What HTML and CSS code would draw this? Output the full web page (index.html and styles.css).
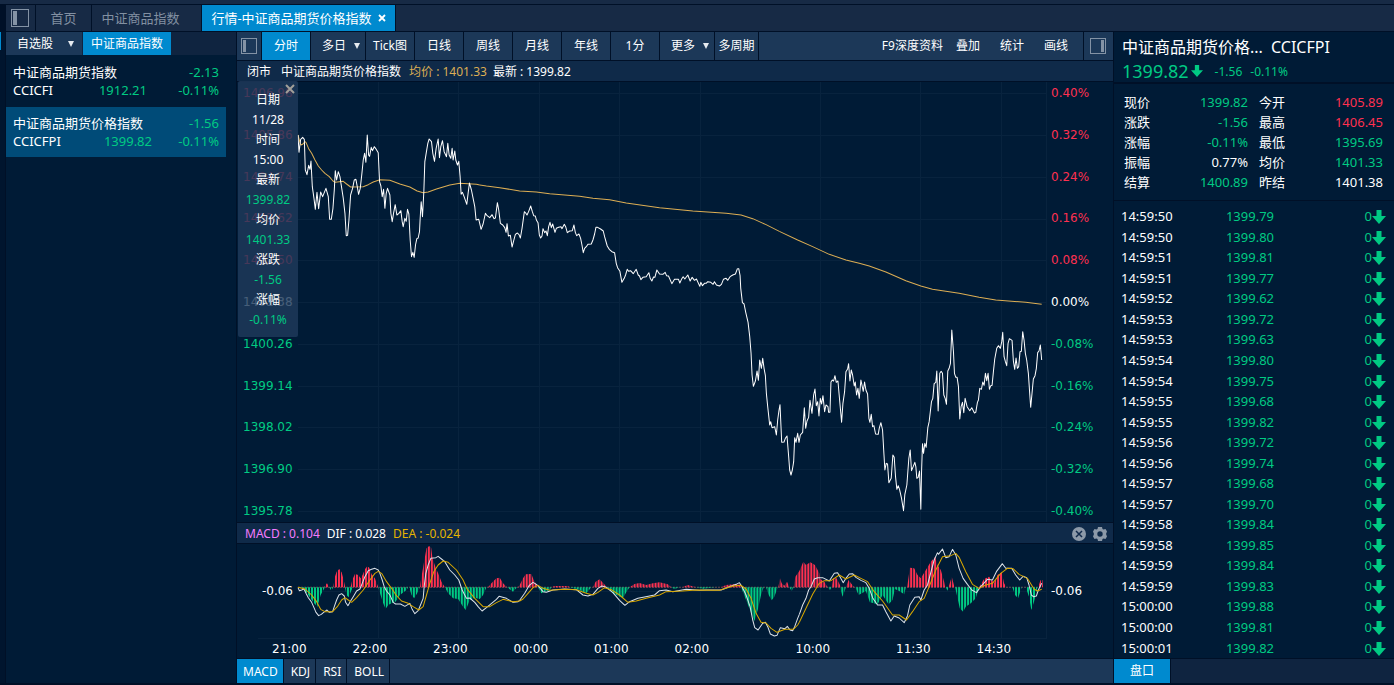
FILE: index.html
```html
<!DOCTYPE html>
<html lang="zh-CN">
<head>
<meta charset="utf-8">
<title>行情-中证商品期货价格指数</title>
<link rel="stylesheet" href="styles.css">
</head>
<body>
<div class="app">
  <nav class="tabs">
    <button class="tab tab-icon" aria-label="侧栏"><svg width="18" height="18" viewBox="0 0 18 18"><rect x=".5" y=".5" width="17" height="17" fill="none" stroke="#8493a5"/><rect x="2" y="2" width="4" height="14" fill="#8493a5"/></svg></button>
    <button class="tab tab-home">首页</button>
    <button class="tab tab-mid">中证商品指数</button>
    <button class="tab tab-on">行情-中证商品期货价格指数<svg width="8" height="8" viewBox="0 0 8 8"><path d="M1 1l6 6M7 1l-6 6" stroke="#fff" stroke-width="1.8"/></svg></button>
  </nav>
  <main class="main">
    <div class="edge"><i class="edge-mark"></i></div>

    <aside class="watch">
      <div class="watch-head">
        <button class="group">自选股<i class="caret"></i></button>
        <button class="group group-on">中证商品指数</button>
      </div>
      <ul class="list">
        <li class="item"><div class="row"><span>中证商品期货指数</span><span class="down">-2.13</span></div><div class="row"><span class="code">CCICFI</span><span class="down price">1912.21</span><span class="down pct">-0.11%</span></div></li>
        <li class="item item-on"><div class="row"><span>中证商品期货价格指数</span><span class="down">-1.56</span></div><div class="row"><span class="code">CCICFPI</span><span class="down price">1399.82</span><span class="down pct">-0.11%</span></div></li>
      </ul>
    </aside>

    <section class="center">
      <div class="toolbar">
        <button class="tool w-icon" aria-label="左栏"><svg width="16" height="16" viewBox="0 0 16 16"><rect x=".5" y=".5" width="15" height="15" fill="none" stroke="#8493a5"/><rect x="2" y="2" width="3" height="12" fill="#8493a5"/></svg></button>
        <button class="tool tool-on">分时</button>
        <button class="tool w-menu">多日<i class="caret"></i></button>
        <button class="tool">Tick图</button>
        <button class="tool">日线</button>
        <button class="tool">周线</button>
        <button class="tool">月线</button>
        <button class="tool">年线</button>
        <button class="tool">1分</button>
        <button class="tool w-menu">更多<i class="caret"></i></button>
        <button class="tool w-multi">多周期</button>
        <div class="links"><button class="link link-f9">F9深度资料</button><button class="link">叠加</button><button class="link">统计</button><button class="link">画线</button></div>
        <button class="tool w-end" aria-label="右栏"><svg width="16" height="16" viewBox="0 0 16 16"><rect x=".5" y=".5" width="15" height="15" fill="none" stroke="#8493a5"/><rect x="11" y="2" width="3" height="12" fill="#8493a5"/></svg></button>
      </div>
      <div class="info"><span class="state">闭市</span><span class="name">中证商品期货价格指数</span><span class="avg">均价 : 1401.33</span><span>最新 : 1399.82</span></div>

      <div class="chart">
        <div class="axis axis-left"><span class="up">1406.98</span><span class="up">1405.86</span><span class="up">1404.74</span><span class="up">1403.62</span><span class="up">1402.50</span><span>1401.38</span><span class="down">1400.26</span><span class="down">1399.14</span><span class="down">1398.02</span><span class="down">1396.90</span><span class="down">1395.78</span></div>
        <svg class="plot" viewBox="0 0 2250 1320" preserveAspectRatio="none">
          <path class="grid" d="M0 34H2250M0 160H2250M0 285H2250M0 411H2250M0 536H2250M0 661H2250M0 787H2250M0 912H2250M0 1037H2250M0 1163H2250M0 1288H2250M241 0V1320M483 0V1320M724 0V1320M967 0V1320M1208 0V1320M1570 0V1320M1871 0V1320M2113 0V1320M2248 0V1320"/>
          <g class="line-avg">
            <polyline transform="translate(-204 -6)" points="204,165 210,188 213,195 219,192 225,185 228,187 237,208 245,220 255,240 265,258 275,270 285,280 298,290 309,303 316,307 340,304 350,312 362,321 400,320 415,314 430,306 450,299 480,301 510,312 540,321 562,333 580,338 595,336 620,327 660,315 690,310 740,313 750,315"/>
            <polyline transform="translate(546 234)" points="0,75 20,78 60,83 120,93 170,96 210,101 300,109 340,115 390,119 440,129 540,143 640,153 740,160 785,165 820,176 860,194 900,214"/>
            <polyline transform="translate(1266 534)" points="180,-86 235,-60 280,-40 330,-17 380,0 420,10 450,18 500,36 560,62 605,78 640,88 680,94 720,100 780,112 830,120 920,127 968,133"/>
          </g>
          <g class="line-price">
            <polyline transform="translate(-204 -6)" points="204,165 207,217 212,178 218,172 223,178 226,270 231,284 236,256 240,268 243,243 247,320 252,355 256,388 261,337 266,386 272,336 278,350 288,325 295,350 299,418 304,418 309,385 313,330 316,272 320,300 325,275 330,290 340,355 345,400 349,467 353,466 357,420 362,345 368,325 373,300 378,298 382,320 386,343 391,325 396,280 400,240 404,220 408,247 412,165 416,225 419,229 424,202 428,212 433,200 437,205 445,218 449,305 453,318 457,350 461,328 465,385 469,340 473,325 480,345 483,400 487,425 491,400 496,374 501,405 507,400 513,392 517,425 520,440 525,415 529,424 533,388 537,402 541,480 545,530 549,517 553,532 557,495 561,476 565,474 569,455 571,415 574,365 578,410 582,335 585,245 589,220 594,190 598,177 605,185 609,220 614,244 619,205 625,177 629,233 633,200 638,182 643,215 650,230 654,190 658,225 663,235 667,205 670,240 675,213 678,240 683,255 687,244 691,290 694,343 698,337 703,350 711,373 715,340 719,309 725,330 729,350 735,380 739,420 747,418 754,448"/>
            <polyline transform="translate(546 234)" points="4,208 10,192 17,160 22,167 30,173 37,164 43,176 47,174 53,128 57,150 62,190 69,195 75,203 79,217 82,191 86,228 92,226 97,261 102,242 107,223 113,219 118,224 122,234 127,205 134,155 138,159 142,165 147,154 153,138 158,155 162,167 167,168 170,180 175,188 179,225 183,234 187,228 190,206 195,218 199,213 203,227 207,200 211,187 215,203 219,192 226,217 230,205 237,202 244,200 247,206 254,193 258,200 263,218 270,213 278,212 283,195 287,217 291,227 298,222 303,235 307,255 311,278 315,265 320,260 325,253 335,252 340,240 345,222 349,202 354,202 363,207 371,213 375,230 383,258 389,268 397,275 405,278 410,310 414,323 421,334 427,367 434,355 438,345 443,328 447,334 453,332 461,341 470,328 476,345 480,348 484,359 490,352 500,350 508,338 512,355 517,363 522,351 526,352 532,330 540,342 550,343 557,337 561,347 567,348 577,371 585,358 597,358 601,369 606,358 611,350 616,357 625,345 632,363 638,352 645,361 651,357 661,379 664,367 669,377 675,370 680,370 685,365 694,367 701,373 705,365 711,375 720,378 726,373 732,358 740,355 745,361 752,350 760,345 768,342 774,326"/>
            <polyline transform="translate(1266 534)" points="54,26 58,26 62,47 64,85 69,128 74,132 79,157 86,187 91,230 95,280 98,345 102,379 108,363 113,333 117,361 121,300 126,325 130,295 134,325 138,347 141,400 145,440 151,495 154,485 158,503 166,500 171,525 175,480 179,450 182,434 187,547 194,546 198,535 203,528 208,590 211,630 215,645 219,630 223,605 226,533 230,547 235,520 239,547 243,525 250,517 255,443 259,505 263,483 268,472 272,421 278,460 283,405 287,387 291,437 295,425 299,468 303,415 307,432 311,407 316,455 320,435 326,440 328,457 332,457 335,366 339,360 343,363 347,347 351,367 356,363 361,420 367,487 371,430 376,395 380,335 385,327 388,311 392,363 396,330 400,345 405,378 408,366 412,405 416,385 420,415 425,360 432,394 436,366 440,390 445,402 449,475 452,487 456,463 460,500 464,497 469,522 477,523 480,505 485,488 490,510 494,580 497,630 501,610 505,612 509,668 516,655 521,585 525,592 529,650 533,688 537,677 541,688 547,715 553,752 557,703 563,675 569,595 573,570 577,632 582,620 587,607 590,620 593,655 597,652 601,633 605,748 607,640 610,551 613,580 617,550 621,562 626,503 630,485 637,425 641,415 645,371 650,367 653,333 657,453 662,340 666,334 670,340 674,405 678,415 682,433 686,333 690,325 694,310 698,210 703,275 706,340 710,352 714,352 718,380 722,477 726,440 730,427 734,458 738,415 744,440 752,452 758,443 766,459 770,457 775,427 778,420 782,385 787,388 791,366 795,376 799,340 803,362 807,340 811,388 815,377 819,376 823,335 827,297 833,265 838,257 844,265 848,245 851,217 855,290 859,305 863,317 867,250 871,236 879,241 883,303 887,328 891,294 895,325 899,320 903,275 907,274 911,215 915,240 919,280 923,300 928,340 932,400 935,442 939,400 943,357 948,347 952,325 956,278 960,273 964,255 968,300"/>
          </g>
        </svg>
        <div class="axis axis-right"><span class="up">0.40%</span><span class="up">0.32%</span><span class="up">0.24%</span><span class="up">0.16%</span><span class="up">0.08%</span><span>0.00%</span><span class="down">-0.08%</span><span class="down">-0.16%</span><span class="down">-0.24%</span><span class="down">-0.32%</span><span class="down">-0.40%</span></div>
        <dl class="tip">
          <dt>日期</dt><dd>11/28</dd><dt>时间</dt><dd>15:00</dd><dt>最新</dt><dd class="down">1399.82</dd><dt>均价</dt><dd class="down">1401.33</dd><dt>涨跌</dt><dd class="down">-1.56</dd><dt>涨幅</dt><dd class="down">-0.11%</dd>
        </dl>
        <button class="tip-close" aria-label="关闭"><svg width="10" height="10" viewBox="0 0 10 10"><path d="M1 1l8 8M9 1l-8 8" stroke="#a29f99" stroke-width="2"/></svg></button>
      </div>

      <div class="macd-head">
        <span class="c-macd">MACD : 0.104</span><span>DIF : 0.028</span><span class="c-dea">DEA : -0.024</span>
        <div class="macd-tools">
          <button class="ibtn" aria-label="关闭指标"><svg width="14" height="14" viewBox="0 0 14 14"><circle cx="7" cy="7" r="7" fill="#8c99a8"/><path d="M4 4l6 6M10 4l-6 6" stroke="#10294a" stroke-width="1.5"/></svg></button>
          <button class="ibtn" aria-label="设置"><svg width="14" height="14" viewBox="0 0 14 14"><path fill="#8c99a8" fill-rule="evenodd" d="M5 0h4l.5 2 1 .6 2-.6L14 4.500 13 7l1 2.500-1.500 2.500-2-.6-1 .6L9 14H5l-.5-2-1-.6-2 .6L0 9.500 1 7 0 4.500 1.500 2l2 .6 1-.6zM7 4.300a2.700 2.700 0 1 0 0 5.400a2.700 2.700 0 1 0 0-5.400z"/></svg></button>
        </div>
      </div>
      <div class="macd">
        <span class="zero">-0.06</span>
        <svg class="plot" viewBox="0 0 2250 285" preserveAspectRatio="none">
          <defs>
            <pattern id="up-bars" width="9" height="400" patternUnits="userSpaceOnUse"><rect width="6" height="400" fill="#ff3050"/></pattern>
            <pattern id="down-bars" width="9" height="400" patternUnits="userSpaceOnUse"><rect width="6" height="400" fill="#00ca83"/></pattern>
          </defs>
          <path class="grid" d="M0 142H2250M-120 283H2250M241 0V283M483 0V283M724 0V283M967 0V283M1208 0V283M1570 0V283M1871 0V283M2113 0V283M2248 0V283"/>
          <path class="base" d="M0 130H2235"/>
          <g fill="url(#up-bars)">
            <path transform="translate(-204 -87)" d="M282 217L291 205L298 217ZM310 217L315 185L320 170L328 162L335 172L340 190L346 217ZM362 217L367 195L375 177L385 180L392 190L398 180L405 163L412 154L418 158L425 178L435 190L445 217ZM570 217L575 185L582 145L590 100L598 93L604 98L608 130L618 160L625 175L635 200L645 217ZM775 217L785 205L800 190L810 188L820 205L832 217Z"/>
            <path transform="translate(666 -87)" d="M-5 217L0 210L10 190L18 178L35 177L42 195L55 217ZM95 217L105 213L145 213L150 217ZM220 217L228 200L240 193L250 203L262 217ZM330 217L345 207L360 204L380 210L400 205L420 202L445 208L455 217ZM488 217L505 210L530 217ZM605 217L620 210L650 207L665 210L668 217ZM777 217L782 190L787 205L795 212L803 200L810 217ZM823 217L828 185L840 168L852 140L860 150L873 142L887 150L900 175L905 217Z"/>
            <path transform="translate(1506 -87)" d="M60 217L60 190L75 200L85 217ZM97 217L102 190L112 190L122 210L125 217ZM140 217L148 195L155 205L165 217ZM324 217L332 158L345 160L355 180L365 190L380 165L395 140L408 125L415 150L425 165L435 200L438 217ZM448 217L458 185L466 217ZM540 217L555 192L570 185L585 205L595 180L608 172L615 205L622 217ZM717 217L725 195L730 195L732 217Z"/>
          </g>
          <g fill="url(#down-bars)">
            <path transform="translate(-204 -87)" d="M204 217L220 222L235 240L250 262L262 275L272 240L285 217ZM298 217L304 227L310 217ZM345 217L350 240L356 247L365 225L370 217ZM445 217L452 240L460 265L467 282L475 270L485 265L497 260L510 240L530 225L535 217ZM538 217L545 240L553 250L562 235L570 217ZM645 217L655 235L670 250L685 252L700 275L708 285L720 255L735 248L750 252L760 240L770 217ZM832 217L850 230L862 217Z"/>
            <path transform="translate(666 -87)" d="M55 217L65 235L90 225L95 217ZM150 217L180 225L200 235L215 217ZM262 217L280 235L310 250L320 232L330 217ZM455 217L465 222L480 217ZM530 217L550 221L590 217ZM665 217L680 255L692 285L705 318L715 285L725 240L733 217ZM740 217L748 240L757 256L765 245L775 217ZM810 217L817 228L823 217Z"/>
            <path transform="translate(1506 -87)" d="M85 217L92 225L97 217ZM122 217L130 245L140 217ZM168 217L178 240L200 228L212 262L235 268L250 240L268 268L280 255L287 222L300 228L315 238L320 217ZM440 217L445 227L448 217ZM468 217L482 280L492 290L500 275L515 265L530 250L540 217ZM640 217L648 240L657 250L668 217ZM680 217L690 245L697 285L705 260L715 217Z"/>
          </g>
          <g class="line-dif">
            <polyline transform="translate(-204 -87)" points="204,218 208,227 215,225 222,222 228,235 235,248 245,262 253,280 258,292 266,302 274,298 281,292 291,285 298,292 308,290 313,275 320,255 327,240 335,236 343,243 347,262 354,272 362,258 370,245 380,228 390,222 397,205 405,185 415,167 425,163 435,160 445,165 450,175 457,195 463,215 470,228 480,240 490,262 497,267 512,267 525,274 540,265 547,283 555,296 565,287 572,270 580,250 583,215 588,175 595,150 603,130 618,128 625,124 635,132 645,140 660,165 675,180 687,195 697,225 710,250 720,249 735,262 745,275 757,288 770,278 800,253 808,244 830,250 850,262 865,260 870,256"/>
            <polyline transform="translate(666 -87)" points="0,256 15,235 28,212 40,202 50,208 58,215 70,230 80,232 100,225 135,222 170,224 190,240 205,243 220,238 235,220 247,213 260,217 280,233 300,256 316,271 330,260 355,250 375,246 405,240 420,227 440,225 460,230 500,223 540,226 560,225 605,225 630,215 650,208 660,203 668,215 680,240 692,275 700,315 706,338 716,345 730,325 738,322 745,335 753,357 765,363 773,361 783,338 797,341 804,334 812,345 820,347 826,335 835,310 840,298"/>
            <polyline transform="translate(1506 -87)" points="0,298 10,270 20,250 28,225 35,215 45,192 55,188 70,188 90,198 105,175 115,173 122,185 132,203 140,190 150,177 160,176 170,187 185,196 200,203 210,220 220,248 235,270 250,270 260,290 275,318 285,303 300,309 315,323 325,302 332,270 347,247 360,245 365,255 375,225 385,210 397,165 405,135 415,113 418,118 430,102 440,128 450,125 460,103 470,120 480,160 492,190 505,208 518,225 532,233 545,215 565,193 580,195 592,170 610,146 620,160 638,160 650,180 662,195 672,184 683,188 690,210 697,240 703,245 712,243 718,225 728,205"/>
          </g>
          <g class="line-dea">
            <polyline transform="translate(-204 -87)" points="204,217 225,222 245,240 260,260 272,283 285,290 308,290 322,275 335,255 345,248 355,255 365,262 380,248 400,225 420,195 435,175 445,169 455,175 470,200 485,220 500,242 515,258 535,265 550,275 567,285 580,275 590,240 600,205 612,170 625,150 640,138 655,142 680,165 700,195 712,222 735,250 760,275 780,275 800,263 820,253 850,260 870,258"/>
            <polyline transform="translate(666 -87)" points="0,258 10,252 25,235 40,218 55,211 70,220 90,226 135,223 170,224 200,235 220,240 235,232 255,218 275,224 300,240 325,262 350,258 380,250 420,240 440,230 490,228 530,225 600,226 640,213 665,211 680,222 695,250 710,295 725,322 740,324 755,340 773,352 797,343 822,343 835,330 840,322"/>
            <polyline transform="translate(1506 -87)" points="0,322 20,280 40,238 60,205 75,197 95,197 120,180 140,192 165,180 185,190 205,200 225,230 250,258 280,300 300,300 322,315 340,290 360,260 375,250 390,215 410,165 430,125 455,122 470,115 480,127 500,170 520,208 540,220 560,210 580,205 605,175 625,160 642,161 660,178 685,190 705,222 715,228 728,223"/>
          </g>
        </svg>
        <span class="zero zero-r">-0.06</span>
      </div>
      <div class="times"><span>21:00</span><span>22:00</span><span>23:00</span><span>00:00</span><span>01:00</span><span>02:00</span><span>10:00</span><span>11:30</span><span>14:30</span></div>
      <div class="indicators"><button class="ind ind-on">MACD</button><button class="ind">KDJ</button><button class="ind">RSI</button><button class="ind">BOLL</button></div>
    </section>

    <aside class="quote">
      <header class="q-head">
        <div class="q-title"><span class="q-name" title="中证商品期货价格指数">中证商品期货价格...</span><span>CCICFPI</span></div>
        <div class="q-price down"><span class="q-last">1399.82</span><svg width="12" height="12" viewBox="0 0 14 14"><path d="M4.500 0h5v6H14L7 14 0 6h4.500z" fill="#00ca83"/></svg><span class="q-chg">-1.56</span><span>-0.11%</span></div>
      </header>
      <dl class="stats">
        <dt>现价</dt><dd class="down">1399.82</dd><dt>今开</dt><dd class="up">1405.89</dd>
        <dt>涨跌</dt><dd class="down">-1.56</dd><dt>最高</dt><dd class="up">1406.45</dd>
        <dt>涨幅</dt><dd class="down">-0.11%</dd><dt>最低</dt><dd class="down">1395.69</dd>
        <dt>振幅</dt><dd>0.77%</dd><dt>均价</dt><dd class="down">1401.33</dd>
        <dt>结算</dt><dd class="down">1400.89</dd><dt>昨结</dt><dd>1401.38</dd>
      </dl>
      <svg class="defs" width="0" height="0"><symbol id="dn" viewBox="0 0 14 14"><path d="M4.500 0h5v6H14L7 14 0 6h4.500z" fill="#00ca83"/></symbol></svg>
      <table class="ticks">
        <tr><td>14:59:50</td><td>1399.79</td><td>0<svg><use href="#dn"/></svg></td></tr>
        <tr><td>14:59:50</td><td>1399.80</td><td>0<svg><use href="#dn"/></svg></td></tr>
        <tr><td>14:59:51</td><td>1399.81</td><td>0<svg><use href="#dn"/></svg></td></tr>
        <tr><td>14:59:51</td><td>1399.77</td><td>0<svg><use href="#dn"/></svg></td></tr>
        <tr><td>14:59:52</td><td>1399.62</td><td>0<svg><use href="#dn"/></svg></td></tr>
        <tr><td>14:59:53</td><td>1399.72</td><td>0<svg><use href="#dn"/></svg></td></tr>
        <tr><td>14:59:53</td><td>1399.63</td><td>0<svg><use href="#dn"/></svg></td></tr>
        <tr><td>14:59:54</td><td>1399.80</td><td>0<svg><use href="#dn"/></svg></td></tr>
        <tr><td>14:59:54</td><td>1399.75</td><td>0<svg><use href="#dn"/></svg></td></tr>
        <tr><td>14:59:55</td><td>1399.68</td><td>0<svg><use href="#dn"/></svg></td></tr>
        <tr><td>14:59:55</td><td>1399.82</td><td>0<svg><use href="#dn"/></svg></td></tr>
        <tr><td>14:59:56</td><td>1399.72</td><td>0<svg><use href="#dn"/></svg></td></tr>
        <tr><td>14:59:56</td><td>1399.74</td><td>0<svg><use href="#dn"/></svg></td></tr>
        <tr><td>14:59:57</td><td>1399.68</td><td>0<svg><use href="#dn"/></svg></td></tr>
        <tr><td>14:59:57</td><td>1399.70</td><td>0<svg><use href="#dn"/></svg></td></tr>
        <tr><td>14:59:58</td><td>1399.84</td><td>0<svg><use href="#dn"/></svg></td></tr>
        <tr><td>14:59:58</td><td>1399.85</td><td>0<svg><use href="#dn"/></svg></td></tr>
        <tr><td>14:59:59</td><td>1399.84</td><td>0<svg><use href="#dn"/></svg></td></tr>
        <tr><td>14:59:59</td><td>1399.83</td><td>0<svg><use href="#dn"/></svg></td></tr>
        <tr><td>15:00:00</td><td>1399.88</td><td>0<svg><use href="#dn"/></svg></td></tr>
        <tr><td>15:00:00</td><td>1399.81</td><td>0<svg><use href="#dn"/></svg></td></tr>
        <tr><td>15:00:01</td><td>1399.82</td><td>0<svg><use href="#dn"/></svg></td></tr>
      </table>
      <div class="q-foot"><button class="q-tab">盘口</button></div>
    </aside>
  </main>
</div>
</body>
</html>
```

FILE: styles.css
```css
* { box-sizing: border-box; }
body { margin: 0; background: #001027; color: #fff; font: 13px/18px "Noto Sans", "Noto Sans CJK SC", sans-serif; }
button { border: 0; padding: 0; margin: 0; background: none; color: inherit; font: inherit; white-space: nowrap; }
ul, dl, dd { margin: 0; padding: 0; list-style: none; }
svg { display: block; }
.up { color: #ff3050; }
.down { color: #00ca83; }
.caret { border: 3px solid transparent; border-top: 6px solid #e6ebf0; border-bottom: 0; }

.app { display: flex; flex-direction: column; height: 100vh; border-top: 4px solid #172a45; }
.tabs { display: flex; height: 28px; flex: none; gap: 1px; padding-left: 6px; border: solid #001027; border-width: 1px 0; background: linear-gradient(90deg, #001027 396px, #172a45 396px); }
.tab { background: #172a45; color: #8290a2; display: flex; align-items: center; justify-content: center; }
.tab-icon { width: 29px; padding-right: 2px; }
.tab-home { width: 55px; }
.tab-mid { width: 109px; padding-right: 12px; }
.tab-on { width: 193px; background: #008acf; color: #fff; gap: 6px; }

.main { flex: 1; display: flex; gap: 1px; min-height: 0; padding-bottom: 2px; }
.edge { width: 5px; flex: none; background: #00152e; }
.edge-mark { display: block; width: 1px; height: 18px; background: #008acf; }

.watch { width: 230px; flex: none; background: #001b36; }
.watch-head { display: flex; height: 23px; gap: 1px; background: #0f2440; font-size: 12px; }
.group { width: 76px; background: #1c3858; display: flex; align-items: center; justify-content: center; gap: 15px; padding-left: 3px; }
.group-on { width: 88px; padding-left: 0; background: #008acf; }
.list { width: 220px; padding-top: 1px; }
.item { height: 50px; padding: 7px 7px; margin-bottom: 1px; }
.item-on { background: #004b78; }
.row { display: flex; justify-content: space-between; }
.code { width: 70px; }
.price { flex: 1; text-align: right; margin-right: 22px; }
.pct { width: 50px; text-align: right; }
.item-on .price { margin-right: 17px; }

.center { flex: 1; min-width: 0; display: flex; flex-direction: column; background: #001b36; }
.toolbar { display: flex; height: 28px; flex: none; gap: 1px; background: #001027; font-size: 12px; }
.tool { width: 48px; background: #1c3858; display: flex; align-items: center; justify-content: center; gap: 8px; }
.tool-on { background: #008acf; }
.w-icon { width: 24px; }
.w-menu { width: 54px; padding-left: 6px; }
.w-multi { width: 43px; }
.w-end { width: 29px; padding-right: 2px; }
.links { flex: 1; display: flex; justify-content: flex-end; align-items: center; gap: 20px; padding-right: 15px; background: #1c3858; }
.link-f9 { margin-right: -7px; }
.info { display: flex; align-items: center; height: 22px; flex: none; padding: 1px 0 0 10px; border: solid #001027; border-width: 1px 0; background: #0f2a49; font-size: 12px; }
.state { margin-right: 10px; }
.name { margin-right: 8px; }
.avg { margin-right: 6px; color: #dcae54; }

.chart { position: relative; flex: 1; min-height: 0; display: flex; }
.axis { display: flex; flex-direction: column; justify-content: space-between; flex: none; padding: 2px 0; font: 12px/18px "DejaVu Sans", sans-serif; }
.axis-left { width: 61px; padding-left: 6px; }
.axis-right { width: 66px; padding-left: 4px; }
.plot { flex: 1; min-width: 0; width: 0; height: 100%; overflow: visible; }
.plot path, .plot polyline { vector-effect: non-scaling-stroke; }
.grid { stroke: #08233e; fill: none; shape-rendering: crispEdges; }
.line-avg, .line-price, .line-dif, .line-dea { fill: none; stroke-width: 1px; stroke-linejoin: round; }
.line-avg { stroke: #dcae54; }
.line-price { stroke: #fff; }
.line-dif { stroke: #dce3ea; }
.line-dea { stroke: #d8a800; }
.base { stroke: #6a4a52; stroke-dasharray: 2 1; }
.tip { position: absolute; left: 1px; top: -1px; width: 60px; height: 256px; padding-top: 9px; background: rgba(30, 58, 92, .82); border-radius: 2px; text-align: center; font-size: 12px; line-height: 20px; }
.tip-close { position: absolute; left: 48px; top: 2px; }

.macd-head { display: flex; align-items: center; height: 22px; flex: none; gap: 7px; padding: 1px 6px 0 8px; border: solid #001027; border-width: 1px 0; background: #0f2a49; font-size: 12px; }
.c-macd { color: #f47cff; }
.c-dea { color: #e6b400; }
.macd-tools { display: flex; gap: 7px; margin-left: auto; }
.macd { display: flex; height: 95px; flex: none; }
.zero { width: 61px; flex: none; padding: 38px 5px 0 0; text-align: right; font: 12px/18px "DejaVu Sans", sans-serif; }
.zero-r { width: 66px; padding: 38px 0 0 4px; text-align: left; }
.times { display: grid; grid-template-columns: 161fr 161fr 161fr 161fr 161fr 242fr 201fr 161fr 141fr; padding: 1px 66px 0 35px; height: 19px; flex: none; font: 12px/19px "DejaVu Sans", sans-serif; }
.indicators { display: flex; gap: 1px; height: 25px; flex: none; border-top: 1px solid #001027; background: #1c3858; font-size: 12px; }
.ind { padding: 2px 5px 0 6px; border-right: 1px solid #001027; }
.ind-on { background: #008acf; }

.quote { width: 280px; flex: none; display: flex; flex-direction: column; background: #001b36; }
.q-head { height: 52px; flex: none; padding: 4px 8px 0; border-bottom: 2px solid #001027; }
.q-title { display: flex; gap: 8px; font-size: 16px; line-height: 22px; }
.q-name { min-width: 141px; white-space: nowrap; }
.q-price { display: flex; align-items: center; font-size: 12px; line-height: 24px; }
.q-last { font-size: 18px; margin-right: 2px; }
.q-chg { margin: 2px 8px 0 12px; }
.q-chg + span { margin-top: 2px; }
.stats { display: grid; grid-template-columns: 40px 84px 46px 1fr; grid-auto-rows: 20px; line-height: 20px; padding: 8px 11px 8px 10px; border-bottom: 1px solid #001027; }
.stats dd { text-align: right; }
.stats dt:nth-of-type(even) { padding-left: 11px; }
.defs { position: absolute; }
.ticks { flex: 1; width: 100%; table-layout: fixed; border-collapse: collapse; margin-top: 5px; }
.ticks td { padding: 0 0 0 7px; line-height: 20px; }
.ticks td + td { padding: 0 8px 0 0; color: #00ca83; text-align: center; }
.ticks td:last-child { text-align: right; }
.ticks svg { display: inline-block; width: 14px; height: 14px; vertical-align: -3px; }
.q-foot { display: flex; height: 25px; flex: none; border-top: 1px solid #001027; background: #0f2440; font-size: 12px; }
.q-tab { width: 57px; background: #008acf; border-right: 1px solid #001027; }
```
